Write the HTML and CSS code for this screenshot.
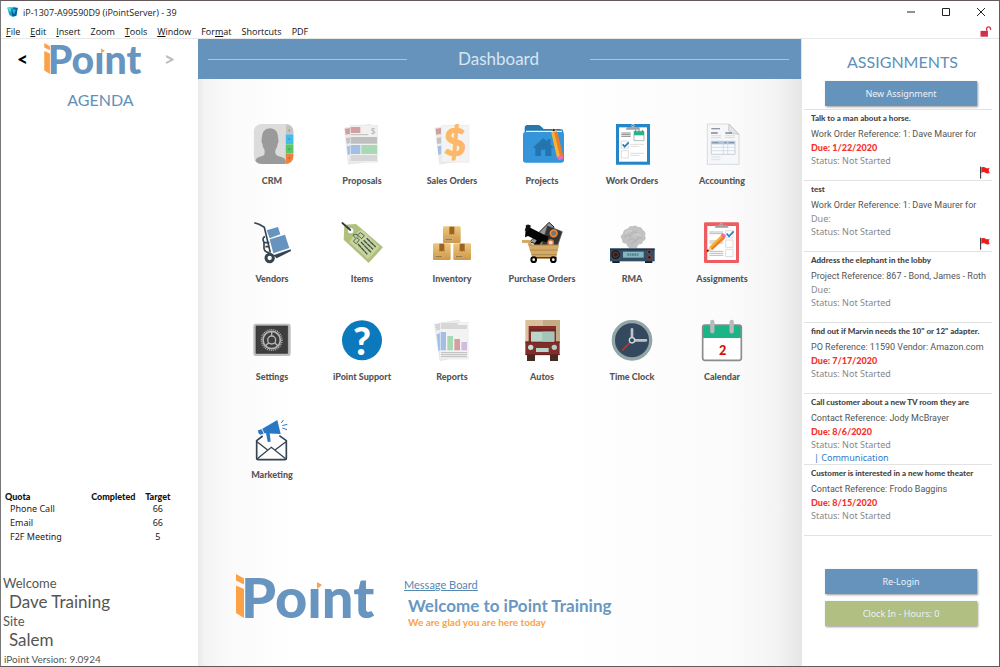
FILE: index.html
```html
<!DOCTYPE html>
<html lang="en">

<head>
    <meta charset="UTF-8">
    <meta name="viewport" content="width=device-width, initial-scale=1.0">
    <title>iP-1307-A99590D9 (iPointServer) - 39</title>
    <link rel="stylesheet" href="styles.css">
</head>

<body>
    <header class="titlebar">
        <svg class="app-icon" viewBox="0 0 36 36">
            <path d="M1 5l20-3 11 4-4 23-10 4-11-6z" fill="#1b9ed8" />
            <path d="M1 5l20-3-7 16-8-3z" fill="#43e0cf" />
            <path d="M12 8l20-3-4 24-12 2z" fill="#0a5f92" />
            <path d="M14 9l13 2-6 14z" fill="#27b6e6" />
        </svg>
        <span class="window-title">iP-1307-A99590D9 (iPointServer) - 39</span>
        <div class="window-buttons">
            <button type="button" aria-label="Minimize"><svg viewBox="0 0 10 10"><path d="M1 5h8" /></svg></button>
            <button type="button" aria-label="Maximize"><svg viewBox="0 0 10 10"><path d="M1.500 1.500h7v7h-7z" /></svg></button>
            <button type="button" aria-label="Close"><svg viewBox="0 0 10 10"><path d="M1 1l8 8M9 1l-8 8" /></svg></button>
        </div>
    </header>

    <nav class="menubar">
        <button type="button"><u>F</u>ile</button>
        <button type="button"><u>E</u>dit</button>
        <button type="button"><u>I</u>nsert</button>
        <button type="button">Zoom</button>
        <button type="button"><u>T</u>ools</button>
        <button type="button"><u>W</u>indow</button>
        <button type="button">For<u>m</u>at</button>
        <button type="button">Shortcuts</button>
        <button type="button">PDF</button>
        <svg class="lock" viewBox="0 0 36 34">
            <path d="M1 15h23v18H1z" fill="#d2304a" />
            <path d="M20 15V9q0-6 6-6t6 6v3" fill="none" stroke="#d2304a" stroke-width="4" />
        </svg>
    </nav>

    <div class="layout">
        <aside class="agenda">
            <div class="agenda-nav">
                <button type="button" class="prev">&lt;</button>
                <svg class="logo-small" viewBox="0 0 136 47" role="img" aria-label="iPoint">
                    <path d="M0 0l8 4.500v6L0 6.500zM0 11.500L8 15v29l-8-5z" fill="#fca146" />
                    <path d="M81 8l5 3-5 4z" fill="#fca146" />
                    <text class="logo-text" x="5" y="44">Poınt</text>
                </svg>
                <button type="button" class="next">&gt;</button>
            </div>
            <h2>AGENDA</h2>

            <table class="quota">
                <thead>
                    <tr><th>Quota</th><th>Completed</th><th>Target</th></tr>
                </thead>
                <tbody>
                    <tr><td>Phone Call</td><td></td><td>66</td></tr>
                    <tr><td>Email</td><td></td><td>66</td></tr>
                    <tr><td>F2F Meeting</td><td></td><td>5</td></tr>
                </tbody>
            </table>

            <dl class="session">
                <dt>Welcome</dt>
                <dd>Dave Training</dd>
                <dt>Site</dt>
                <dd>Salem</dd>
            </dl>
            <p class="version">iPoint Version: 9.0924</p>
        </aside>

        <main class="dashboard">
            <div class="dashboard-header">
                <h1>Dashboard</h1>
            </div>

            <div class="tiles">
                <button type="button" class="tile">
                    <svg viewBox="57 39 138 126">
                        <clipPath id="crm"><rect x="71" y="42" width="120" height="120" rx="24" /></clipPath>
                        <g clip-path="url(#crm)">
                            <path d="M71 42h96v120H71z" fill="#dcdcdc" />
                            <path d="M167 42h24v30h-24z" fill="#c9c4bb" />
                            <path d="M167 73h24v29h-24z" fill="#45bce8" />
                            <path d="M167 103h24v28h-24z" fill="#5bc56c" />
                            <path d="M167 132h24v30h-24z" fill="#f0813d" />
                            <path d="M74 162q0-19 20-23 10-3 10-9v-9q-6-8-7-20-4-3-2-13 0-33 25-33t25 33q2 10-2 13-1 12-7 20v9q1 6 10 9 19 4 21 12v11z" fill="#9a9a9a" />
                            <path d="M176 59h4v5h-4zM176 85h4v5h-4zM176 115h4v5h-4zM176 142h4v5h-4z" fill="#555" opacity=".5" />
                        </g>
                    </svg>
                    <span>CRM</span>
                </button>

                <button type="button" class="tile">
                    <svg viewBox="327 39 138 126">
                        <path d="M343 54l78-11 12 110-78 10z" fill="#ededed" stroke="#d6d6d6" />
                        <path d="M345 56l16-2v18l-14 2z" fill="#cf9ea1" />
                        <path d="M348 84l14-2v17l-12 2z" fill="#c2c2c2" />
                        <path d="M351 109l12-2v25l-10 2z" fill="#a4bfe6" />
                        <path d="M360 46h83v111h-83z" fill="#f1f1f1" stroke="#dcdcdc" />
                        <path d="M362 51h29v18h-29z" fill="#d2a0a3" />
                        <path d="M362 81h79v20h-79z" fill="#bfbfbf" />
                        <path d="M362 105h29v27h-29z" fill="#a4bfe6" />
                        <path d="M394 105h47v27h-47z" fill="#a9d8b5" />
                        <path d="M362 74h53M362 138h79M362 144h79M362 150h79" stroke="#bbb" stroke-width="3" />
                        <text x="422" y="71" font-size="24" font-weight="700" fill="#b9b9b9">$</text>
                    </svg>
                    <span>Proposals</span>
                </button>

                <button type="button" class="tile">
                    <svg viewBox="597 39 138 126">
                        <path d="M615 54l70-10 12 107-68 12z" fill="#ededed" stroke="#d6d6d6" />
                        <path d="M617 56l16-2v18l-14 2z" fill="#cf9ea1" />
                        <path d="M620 84l14-2v18l-12 2z" fill="#c2c2c2" />
                        <path d="M623 109l12-2v25l-10 2z" fill="#a4bfe6" />
                        <path d="M634 46h83v111h-83z" fill="#f3f3f3" stroke="#dcdcdc" />
                        <text x="675" y="139" font-size="114" text-anchor="middle" fill="#fdb867" stroke="#fdb867" stroke-width="2">$</text>
                    </svg>
                    <span>Sales Orders</span>
                </button>

                <button type="button" class="tile">
                    <svg viewBox="87 39 138 126">
                        <path d="M104 80V54q0-8 8-9h33q5 0 10 6l6 6h47q12 0 12 10v20z" fill="#2678ac" />
                        <path d="M108 62h108v12H108z" fill="#e8f1f6" />
                        <path d="M99 74q0-8 8-8h107q8 0 8 8v76q0 8-8 8H107q-8 0-8-8z" fill="#3495da" />
                        <path d="M128 113l32-29 12 11v-7h10v16l10 9h-8v25h-18v-19h-13v19h-17v-25z" fill="#2474ad" />
                        <path d="M184 68l16-4 18 73-17 6z" fill="#f9b232" />
                        <path d="M192 66l9-2 18 72-9 3z" fill="#ee7e22" />
                        <path d="M184 68l4-10 7-1 6 7z" fill="#f6d6a4" />
                        <path d="M186 61l5-5 6 4-5 4z" fill="#222" />
                        <path d="M201 140l17-5 3 9q-6 7-16 6z" fill="#f16cae" />
                    </svg>
                    <span>Projects</span>
                </button>

                <button type="button" class="tile">
                    <svg viewBox="357 39 138 126">
                        <path d="M378 42h102v122H378z" fill="#2486c8" />
                        <path d="M387 52h84v103h-84z" fill="#fff" />
                        <path d="M411 51h36l4 8h-44z" fill="#9aa4aa" />
                        <circle cx="429" cy="47" r="4" fill="none" stroke="#bcc6cc" stroke-width="3" />
                        <path d="M394 69h28M394 74h28M394 79h28" stroke="#888" stroke-width="3" />
                        <path d="M432 64h30v28h-30z" fill="#fff" stroke="#999" stroke-width="2" />
                        <path d="M432 64h30v12h-30z" fill="#26b58b" />
                        <path d="M437 60v7M447 60v7M457 60v7" stroke="#687" stroke-width="3" />
                        <path d="M394 93h21v22h-21zM394 122h21v22h-21z" fill="#fff" stroke="#ccc" stroke-width="2" />
                        <path d="M398 103l6 7 12-13" fill="none" stroke="#2382c5" stroke-width="5" />
                        <path d="M421 103h41M421 109h27M421 130h41M421 136h27" stroke="#ccc" stroke-width="2" />
                    </svg>
                    <span>Work Orders</span>
                </button>

                <button type="button" class="tile">
                    <svg viewBox="627 39 138 126">
                        <path d="M652 42h65l30 31v90h-95z" fill="#f6f7f9" stroke="#c4cad1" stroke-width="2" />
                        <path d="M717 42l-1 20 8 8 23 3z" fill="#e2e4e8" stroke="#b4bac2" stroke-width="2" />
                        <path d="M664 56h26" stroke="#8e97a8" stroke-width="4" />
                        <path d="M663 69h20M706 69h20" stroke="#4a4f58" stroke-width="3" />
                        <path d="M663 77h30M663 83h30M706 77h29M706 83h29" stroke="#dbe2ea" stroke-width="4" />
                        <path d="M664 94h71v39h-71z" fill="#f9fbfd" stroke="#aebfd2" stroke-width="2" />
                        <path d="M664 94h71v9h-71z" fill="#aec2d8" />
                        <path d="M667 98h18M702 98h8M716 98h16" stroke="#62768f" stroke-width="2" />
                        <path d="M664 112h71M664 122h71M700 94v39M713 94v39" stroke="#c5d2e2" stroke-width="2" />
                        <path d="M664 141h27M664 149h27" stroke="#c8d6e2" stroke-width="2" />
                    </svg>
                    <span>Accounting</span>
                </button>

                <button type="button" class="tile">
                    <svg viewBox="57 33 138 126">
                        <path d="M73 38l14 5 16 9 18 76" fill="none" stroke="#35444f" stroke-width="5" stroke-linejoin="round" />
                        <path d="M105 80q-10 3-3 18v17q2 12 16 13M103 98h15M106 110h12" fill="none" stroke="#35444f" stroke-width="5" />
                        <path d="M110 61l34-10 7 22-32 12z" fill="#6794bf" />
                        <path d="M119 88l46-14 13 40-48 16z" fill="#6794bf" />
                        <path d="M130 136l52-18 1 5-43 22z" fill="#35444f" />
                        <circle cx="119" cy="144" r="11" fill="#fff" stroke="#35444f" stroke-width="9" />
                    </svg>
                    <span>Vendors</span>
                </button>

                <button type="button" class="tile">
                    <svg viewBox="327 33 138 126">
                        <path d="M343 44l35-2 81 70-43 47-75-70z" fill="#b0c17d" />
                        <path d="M372 72l23-15 55 54-36 38-57-53z" fill="#c6d4a0" stroke="#99ad65" />
                        <circle cx="362" cy="62" r="8" fill="#fff" />
                        <path d="M337 39l24 21" stroke="#33383c" stroke-width="5" stroke-linecap="round" />
                        <path d="M384 102l28 31M393 96l30 31M401 91l28 27M410 85l27 26" stroke="#465046" stroke-width="4" stroke-dasharray="14 1" />
                        <path d="M370 94l10-11 8 6-9 12zM382 75l9-7 12 9-8 9zM376 84l-7-9 10-3 5 8" fill="none" stroke="#59634e" stroke-width="3" />
                    </svg>
                    <span>Items</span>
                </button>

                <button type="button" class="tile">
                    <svg viewBox="597 33 138 126">
                        <defs>
                            <linearGradient id="carton" x2="0" y2="1">
                                <stop stop-color="#ecc681" />
                                <stop offset="1" stop-color="#cf9748" />
                            </linearGradient>
                            <g id="box">
                                <rect width="53" height="50" rx="4" fill="url(#carton)" />
                                <path d="M19 1h15v24l-4-3-4 3-4-3-3 3z" fill="#9b641f" />
                                <path d="M7 36h21v8H7z" fill="#e1c99c" />
                                <path d="M8 40h19" stroke="#6b5433" stroke-width="5" stroke-dasharray="2 1" />
                            </g>
                        </defs>
                        <use href="#box" x="639" y="49" />
                        <use href="#box" x="609" y="100" />
                        <use href="#box" x="670" y="100" />
                    </svg>
                    <span>Inventory</span>
                </button>

                <button type="button" class="tile">
                    <svg viewBox="87 33 138 126">
                        <path d="M119 96l58-59 15 14-20 59z" fill="#999" stroke="#222" stroke-width="3" />
                        <path d="M172 47l45 18-17 50-45-9z" fill="#343434" stroke="#555" stroke-width="2" />
                        <circle cx="191" cy="70" r="10" fill="#777" stroke="#f08a3b" stroke-width="5" />
                        <circle cx="182" cy="98" r="8" fill="#ddd" stroke="#d4773c" stroke-width="4" />
                        <path d="M108 44l16 11 34 17 18 8-5 16-14-2-13 14-17 4 13-21-26-13-9 4z" fill="#050505" />
                        <path d="M104 61l9-18 10 4-9 19z" fill="#111" />
                        <path d="M96 90h23l8 14h80l-9 42h-70l-15-47H96z" fill="#d5aa67" />
                        <path d="M116 105h90M119 120h84M124 134h76" stroke="#9e783f" stroke-width="2" />
                        <path d="M123 143h77" stroke="#5b4527" stroke-width="4" />
                        <circle cx="131" cy="149" r="7" fill="#fff" stroke="#050505" stroke-width="6" />
                        <circle cx="190" cy="149" r="7" fill="#fff" stroke="#050505" stroke-width="6" />
                    </svg>
                    <span>Purchase Orders</span>
                </button>

                <button type="button" class="tile">
                    <svg viewBox="357 33 138 126">
                        <path d="M418 115q-8-7-9-14-14 1-13-13-9-9 3-17 0-14 14-15 5-10 15-7 9-6 16 2 11-2 14 9 12 6 7 17 6 13-6 16-1 11-12 10-4 3-7 12z" fill="#c2c2c2" />
                        <path d="M403 82q10-12 18-3 4-19 19-11M413 94q14-16 22 0 13-16 21-9M424 104q6-12 18-10" fill="none" stroke="#b5b5b5" stroke-width="4" />
                        <path d="M407 70q9-12 19-6M432 80q9-12 20-3" fill="none" stroke="#d0d0d0" stroke-width="4" />
                        <path d="M367 151h22v8h-22zM465 151h22v8h-22z" fill="#161d23" />
                        <rect x="360" y="115" width="134" height="39" fill="#354d64" />
                        <path d="M360 116h134v5H360z" fill="#1f3447" />
                        <circle cx="377" cy="134" r="11" fill="#222" stroke="#16191c" stroke-width="4" />
                        <circle cx="377" cy="134" r="8" fill="none" stroke="#a44439" stroke-width="2" />
                        <path d="M399 125h62v18h-62z" fill="#83b6bf" />
                        <path d="M412 134h35" stroke="#4f7f89" stroke-width="7" stroke-dasharray="5 2" />
                        <circle cx="478" cy="126" r="5" fill="#16191c" stroke="#b04438" stroke-width="2" />
                        <circle cx="478" cy="142" r="5" fill="#16191c" stroke="#b04438" stroke-width="2" />
                    </svg>
                    <span>RMA</span>
                </button>

                <button type="button" class="tile">
                    <svg viewBox="627 33 138 126">
                        <rect x="642" y="37" width="105" height="122" rx="4" fill="#ee5b60" />
                        <path d="M652 48h86v102h-86z" fill="#fff" />
                        <path d="M678 45h34l4 8h-42z" fill="#9aa0a4" />
                        <circle cx="694" cy="43" r="4" fill="none" stroke="#bbb" stroke-width="3" />
                        <path d="M658 66h42M658 71h42M658 93h42M658 99h42M658 124h42M658 130h42M658 136h42" stroke="#bbb" stroke-width="3" />
                        <path d="M707 62h22v21h-22zM707 90h22v22h-22zM707 118h22v22h-22z" fill="#fff" stroke="#ccc" stroke-width="2" />
                        <path d="M710 71l7 8 14-15" fill="none" stroke="#2382c5" stroke-width="5" />
                        <path d="M658 110l36-35 10 10-38 36z" fill="#fab232" />
                        <path d="M663 115l36-35 6 5-39 36z" fill="#ef7d28" />
                        <path d="M658 110l-7 15 15-4z" fill="#f3d6a2" />
                        <path d="M652 118l-2 8 8-3z" fill="#222" />
                        <path d="M692 76l5-6q6 0 11 8l-6 8z" fill="#ee6aa7" />
                    </svg>
                    <span>Assignments</span>
                </button>

                <button type="button" class="tile">
                    <svg viewBox="57 27 138 126">
                        <rect x="70" y="41" width="112" height="97" rx="7" fill="#bdbdbd" />
                        <path d="M78 48h95v82H78z" fill="#3e3e3e" stroke="#303030" stroke-width="2" />
                        <circle cx="125" cy="90" r="31" fill="none" stroke="#b7b7b7" stroke-width="4" stroke-dasharray="3 3" />
                        <circle cx="125" cy="90" r="26" fill="none" stroke="#b7b7b7" stroke-width="5" />
                        <circle cx="125" cy="90" r="12" fill="none" stroke="#b7b7b7" stroke-width="4" />
                        <path d="M125 65v13M116 98l-10 10M134 98l10 10" stroke="#b7b7b7" stroke-width="4" />
                    </svg>
                    <span>Settings</span>
                </button>

                <button type="button" class="tile">
                    <svg viewBox="327 27 138 126">
                        <circle cx="396" cy="91" r="60" fill="#0b79bb" />
                        <text x="396" y="134" font-size="116" font-weight="900" text-anchor="middle" fill="#fff">?</text>
                    </svg>
                    <span>iPoint Support</span>
                </button>

                <button type="button" class="tile">
                    <svg viewBox="597 27 138 126">
                        <path d="M613 42l74-12 17 107-74 15z" fill="#eee" stroke="#d6d6d6" />
                        <path d="M616 46l14-2M617 52l14-2M618 58l14-2" stroke="#bbb" stroke-width="3" />
                        <path d="M620 72l12-2v51l-7 1z" fill="#a4bfe6" />
                        <path d="M630 37h85v110h-85z" fill="#f3f3f3" stroke="#ddd" />
                        <path d="M633 42h50M633 48h78M633 54h78M633 128h78M633 134h78M633 140h78" stroke="#bbb" stroke-width="3" />
                        <path d="M632 66h16v55h-16z" fill="#a4bfe6" />
                        <path d="M652 78h17v43h-17z" fill="#a9d8b5" />
                        <path d="M673 87h17v34h-17z" fill="#d2a0a3" />
                        <path d="M694 96h17v25h-17z" fill="#d1bbdf" />
                    </svg>
                    <span>Reports</span>
                </button>

                <button type="button" class="tile">
                    <svg viewBox="87 27 138 126">
                        <path d="M106 30h51v70h-51z" fill="#dabf9b" />
                        <path d="M157 30h53v70h-53z" fill="#c5aa87" />
                        <path d="M111 130h24v23h-24zM180 130h24v23h-24z" fill="#452c20" />
                        <path d="M116 48h82v47h11v40H106V95h10z" fill="#812e2b" />
                        <path d="M117 60h80M106 96h103M107 134h102" stroke="#64211f" stroke-width="3" />
                        <path d="M123 65h70v30h-70z" fill="#b9d6cb" />
                        <path d="M157 65h36v30h-36z" fill="#a4c5b9" />
                        <circle cx="122" cy="112" r="8" fill="#c6ded5" />
                        <circle cx="193" cy="112" r="8" fill="#b5cec5" />
                        <path d="M138 114h38v12h-38z" fill="#b9d6cb" />
                    </svg>
                    <span>Autos</span>
                </button>

                <button type="button" class="tile">
                    <svg viewBox="357 27 138 126">
                        <circle cx="426" cy="91" r="56" fill="#34495e" stroke="#93a5a6" stroke-width="10" />
                        <path d="M398 120l24-24" stroke="#c0392b" stroke-width="5" stroke-linecap="round" />
                        <path d="M426 85V58M432 91h36" stroke="#bdc3c7" stroke-width="8" stroke-linecap="round" />
                        <circle cx="426" cy="91" r="8" fill="#34495e" stroke="#d5d9db" stroke-width="4" />
                    </svg>
                    <span>Time Clock</span>
                </button>

                <button type="button" class="tile">
                    <svg viewBox="627 27 138 126">
                        <rect x="638" y="45" width="116" height="106" rx="7" fill="#fff" />
                        <path d="M638 84V50q0-5 6-5h104q6 0 6 5v34z" fill="#1bb487" />
                        <rect x="638" y="45" width="116" height="106" rx="7" fill="none" stroke="#8c8c8c" stroke-width="5" />
                        <path d="M667 36v28M725 36v28" stroke="#b9b9b9" stroke-width="13" stroke-linecap="round" />
                        <text x="698" y="134" font-size="38" font-weight="900" text-anchor="middle" fill="#dc0a0a">2</text>
                    </svg>
                    <span>Calendar</span>
                </button>

                <button type="button" class="tile">
                    <svg viewBox="72 21 138 126">
                        <path d="M113 78l-18 14v52q0 5 5 5h79q5 0 5-5V92l-21-15" fill="none" stroke="#35424f" stroke-width="5" />
                        <path d="M96 95l31 24M183 95l-32 24M97 146l42-34 43 34" fill="none" stroke="#35424f" stroke-width="4" />
                        <path d="M99 61l11-3 6 13-11 3q-7-5-6-13z" fill="#2878c4" />
                        <path d="M112 56l45-26 10 42-49-2z" fill="#2878c4" />
                        <path d="M123 69l11-1 3 27-9 1z" fill="#2878c4" />
                        <path d="M169 39l6-9M172 47l15-4M172 54l14 5" stroke="#2878c4" stroke-width="3" />
                    </svg>
                    <span>Marketing</span>
                </button>
            </div>

            <section class="board">
                <svg class="logo-large" viewBox="0 0 136 47" role="img" aria-label="iPoint">
                    <path d="M0 0l8 4.500v6L0 6.500zM0 11.500L8 15v29l-8-5z" fill="#fca146" />
                    <path d="M81 8l5 3-5 4z" fill="#fca146" />
                    <text class="logo-text" x="5" y="44">Poınt</text>
                </svg>
                <div>
                    <a href="#">Message Board</a>
                    <h2>Welcome to iPoint Training</h2>
                    <p>We are glad you are here today</p>
                </div>
            </section>
        </main>

        <aside class="assignments">
            <h2>ASSIGNMENTS</h2>
            <button type="button" class="action">New Assignment</button>
            <ul>
                <li>
                    <h3>Talk to a man about a horse.</h3>
                    <p>Work Order Reference: 1: Dave Maurer for</p>
                    <p class="due">Due: 1/22/2020</p>
                    <p class="status">Status: Not Started</p>
                    <svg class="flag" viewBox="0 0 30 39"><path d="M2 2v36" stroke="#222" stroke-width="3" /><path d="M4 4q8-3 13 1t12 0l-3 8 3 8q-8 3-13-1T4 21z" fill="#ee1c1c" /></svg>
                </li>
                <li>
                    <h3>test</h3>
                    <p>Work Order Reference: 1: Dave Maurer for</p>
                    <p class="status">Due:</p>
                    <p class="status">Status: Not Started</p>
                    <svg class="flag" viewBox="0 0 30 39"><path d="M2 2v36" stroke="#222" stroke-width="3" /><path d="M4 4q8-3 13 1t12 0l-3 8 3 8q-8 3-13-1T4 21z" fill="#ee1c1c" /></svg>
                </li>
                <li>
                    <h3>Address the elephant in the lobby</h3>
                    <p>Project Reference: 867 - Bond, James - Roth</p>
                    <p class="status">Due:</p>
                    <p class="status">Status: Not Started</p>
                </li>
                <li>
                    <h3>find out if Marvin needs the 10" or 12" adapter.</h3>
                    <p>PO Reference: 11590 Vendor: Amazon.com</p>
                    <p class="due">Due: 7/17/2020</p>
                    <p class="status">Status: Not Started</p>
                </li>
                <li>
                    <h3>Call customer about a new TV room they are</h3>
                    <p>Contact Reference: Jody McBrayer</p>
                    <p class="due">Due: 8/6/2020</p>
                    <p class="status">Status: Not Started</p>
                    <a href="#">| Communication</a>
                </li>
                <li>
                    <h3>Customer is interested in a new home theater</h3>
                    <p>Contact Reference: Frodo Baggins</p>
                    <p class="due">Due: 8/15/2020</p>
                    <p class="status">Status: Not Started</p>
                </li>
            </ul>
            <div class="login">
                <button type="button" class="action">Re-Login</button>
                <button type="button" class="action clock-in">Clock In - Hours: 0</button>
            </div>
        </aside>
    </div>
</body>

</html>
```
FILE: styles.css
```css
* {
    box-sizing: border-box;
}

body {
    display: flex;
    flex-direction: column;
    min-height: 100vh;
    margin: 0;
    border: 1px solid #66595a;
    border-left-color: #777;
    background: #fff;
    color: #555;
    font-family: Lato, sans-serif;
    font-size: 10px;
}

h1,
h2,
h3,
p,
ul,
dl,
dd {
    margin: 0;
    padding: 0;
}

button {
    padding: 0;
    border: 0;
    background: none;
    color: inherit;
    font: inherit;
}

svg {
    display: block;
    overflow: visible;
}

/* window chrome */
.titlebar {
    display: flex;
    align-items: center;
    height: 22px;
    padding: 0 13px 0 6px;
    color: #222;
    font-family: "Open Sans", sans-serif;
    font-size: 9px;
}

.app-icon {
    width: 12px;
    height: 12px;
    margin-right: 4px;
}

.window-buttons {
    display: flex;
    gap: 25px;
    margin-left: auto;
}

.window-buttons svg {
    width: 10px;
    height: 10px;
    fill: none;
    stroke: #222;
}

.menubar {
    display: flex;
    align-items: center;
    gap: 10px;
    height: 16px;
    padding: 1px 7px 0 5px;
    border-bottom: 1px solid #e8e8e8;
    color: #111;
    font-family: "Open Sans", sans-serif;
    font-size: 9px;
}

.lock {
    width: 12px;
    height: 11px;
    margin-left: auto;
}

.layout {
    display: grid;
    flex: 1;
    grid-template-columns: 197px 1fr 198px;
}

/* left column */
.agenda {
    display: flex;
    flex-direction: column;
}

.agenda-nav {
    display: flex;
    justify-content: space-between;
    align-items: center;
    padding: 3px 23px 0 16px;
    font-size: 19px;
}

.agenda-nav button {
    font-weight: 900;
    line-height: 34px;
}

.prev {
    color: #000;
}

.agenda-nav .next {
    color: #bbb;
    font-weight: 700;
}

.logo-small {
    width: 96px;
    height: 33px;
    margin-right: 8px;
}

.logo-text {
    fill: #6895c0;
    font-size: 56px;
    font-weight: 900;
}

.agenda h2,
.assignments h2 {
    color: #6090b8;
    font-size: 16px;
    font-weight: 400;
    line-height: 20px;
    text-align: center;
}

.agenda h2 {
    padding: 14px 0 0 2px;
}

.quota {
    width: 169px;
    margin-top: auto;
    margin-left: 4px;
    border-collapse: collapse;
    color: #222;
    font-family: "Noto Sans", sans-serif;
    font-size: 9px;
    line-height: 14px;
}

.quota th {
    padding: 0;
    color: #111;
    font-family: Lato, sans-serif;
    font-weight: 900;
    line-height: 10px;
    text-align: center;
}

.quota td {
    padding: 0;
    text-align: center;
}

.quota th:first-child,
.quota td:first-child {
    text-align: left;
}

.quota td:first-child {
    padding-left: 5px;
}

.quota th:first-child {
    width: 80px;
}

.session {
    padding: 30px 0 0 2px;
}

.session dt {
    font-size: 13px;
    line-height: 18px;
}

.session dd {
    padding-left: 6px;
    font-size: 17px;
    line-height: 20px;
}

.version {
    padding: 2px 0 0 3px;
    font-size: 10px;
    line-height: 14px;
}

/* dashboard */
.dashboard {
    display: flex;
    flex-direction: column;
    background: linear-gradient(90deg, #e9e9e9, #f3f3f3 1%, #fafafa 5%, #fff 16%, #fff 60%, #fbfbfb 88%, #f4f4f4 96%, #e6e6e6);
}

.dashboard-header {
    display: flex;
    align-items: center;
    justify-content: space-between;
    gap: 51px;
    height: 40px;
    padding: 0 12px 0 10px;
    background: #6693bc;
}

.dashboard-header::before,
.dashboard-header::after {
    flex: 1;
    height: 1px;
    background: #a9c4dc;
    content: "";
}

.dashboard-header h1 {
    color: #d8e6f2;
    font-size: 17px;
    font-weight: 400;
    line-height: 20px;
}

.tiles {
    display: grid;
    grid-template-columns: repeat(6, 1fr);
    row-gap: 32px;
    padding: 44px 34px 0 29px;
}

.tile {
    display: flex;
    flex-direction: column;
    align-items: center;
    gap: 8px;
    color: #555;
    font-size: 9px;
    font-weight: 900;
    line-height: 16px;
    white-space: nowrap;
}

.tile svg {
    width: 46px;
    height: 42px;
}

.board {
    display: flex;
    gap: 32px;
    margin-top: auto;
    padding: 0 0 37px 38px;
}

.logo-large {
    width: 136px;
    height: 47px;
}

.board a {
    color: #5588b0;
    font-size: 11px;
    line-height: 22px;
}

.board h2,
.board p {
    padding-left: 4px;
    color: #6898c2;
    font-size: 17px;
    line-height: 20px;
}

.board p {
    color: #fca146;
    font-size: 10px;
    font-weight: 700;
    line-height: 13px;
}

/* right column */
.assignments {
    display: flex;
    flex-direction: column;
    border-left: 1px solid #e6e6e6;
}

.assignments h2 {
    padding: 13px 0 9px 4px;
}

.action {
    height: 25px;
    margin: 0 22px 0 23px;
    background: #6693bc;
    box-shadow: 1px 1px 2px #999;
    color: #eaf2f8;
    font-family: "Noto Sans", sans-serif;
    font-size: 9px;
}

.assignments ul {
    margin: 3px 7px 0 2px;
    border-bottom: 1px solid #e2e2e2;
    list-style: none;
}

.assignments li {
    position: relative;
    min-height: 71px;
    padding: 2px 0 0 7px;
    border-top: 1px solid #e2e2e2;
    font-family: Roboto, sans-serif;
    font-size: 9px;
    line-height: 13px;
    white-space: nowrap;
}

.assignments h3 {
    margin-bottom: 3px;
    color: #444;
    font-family: Lato, sans-serif;
    font-size: 8px;
    font-weight: 900;
    line-height: 13px;
}

.assignments .due {
    color: #f6302a;
    font-family: Lato, sans-serif;
    font-weight: 900;
}

.assignments .status {
    color: #888;
    font-family: "Noto Sans", sans-serif;
}

.assignments li a {
    display: block;
    padding-left: 3px;
    color: #2d79cc;
    font-family: "Noto Sans", sans-serif;
    text-decoration: none;
}

/* sits on the divider below the item */
.flag {
    position: absolute;
    right: 2px;
    bottom: 1px;
    width: 10px;
    height: 13px;
}

.login {
    display: flex;
    flex-direction: column;
    gap: 7px;
    margin-top: auto;
    padding-bottom: 40px;
}

.clock-in {
    background: #b1bf82;
}
```
